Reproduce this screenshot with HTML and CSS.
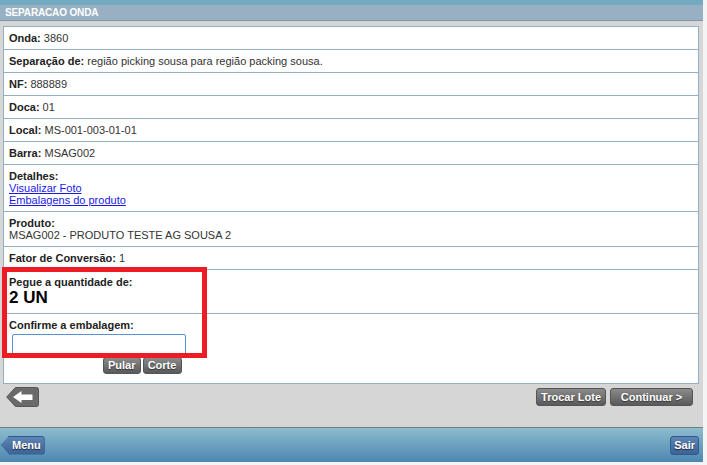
FILE: index.html
```html
<!DOCTYPE html>
<html lang="pt">
<head>
<meta charset="utf-8">
<title>Separacao Onda</title>
<link rel="stylesheet" href="styles.css">
</head>
<body>
<div class="page">
  <div class="topstrip"></div>
  <div class="titlebar">SEPARACAO ONDA</div>
  <main class="content">
    <div class="list">
      <div class="row"><b>Onda:</b> 3860</div>
      <div class="row"><b>Separação de:</b> região picking sousa para região packing sousa.</div>
      <div class="row"><b>NF:</b> 888889</div>
      <div class="row"><b>Doca:</b> 01</div>
      <div class="row"><b>Local:</b> MS-001-003-01-01</div>
      <div class="row"><b>Barra:</b> MSAG002</div>
      <div class="row multi"><b>Detalhes:</b><br><a href="#">Visualizar Foto</a><br><a href="#">Embalagens do produto</a></div>
      <div class="row multi"><b>Produto:</b><br>MSAG002 - PRODUTO TESTE AG SOUSA 2</div>
      <div class="row"><b>Fator de Conversão:</b> 1</div>
      <div class="row qty"><b>Pegue a quantidade de:</b><div class="big">2 UN</div></div>
      <div class="row confirm">
        <b>Confirme a embalagem:</b>
        <input class="field" type="text">
        <div class="smallbtns"><span class="btn small">Pular</span><span class="btn small corte">Corte</span></div>
      </div>
    </div>
    <div class="actions">
      <svg class="back" width="33" height="20" viewBox="0 0 33 20">
        <path d="M9.5 .5H30.5a2 2 0 0 1 2 2V17.500a2 2 0 0 1-2 2H9.500L.7 10Z" fill="#6a6a6a" stroke="#555"/>
        <path d="M7 10 15.500 4v3.500h11v5.500h-11V16Z" fill="#fff"/>
      </svg>
      <div class="rightbtns"><span class="btn">Trocar Lote</span><span class="btn wide">Continuar &gt;</span></div>
    </div>
  </main>
  <footer class="footer">
    <span class="navbtn menu">Menu</span>
    <span class="navbtn">Sair</span>
  </footer>
</div>
<div class="highlight"></div>
</body>
</html>
```
FILE: styles.css
```css
html, body { margin: 0; padding: 0; background: #f4f4f4; }
body { font-family: "Liberation Sans", Arial, sans-serif; font-size: 11px; color: #333; width: 707px; height: 465px; overflow: hidden; position: relative; }
.page { width: 703px; height: 462px; display: flex; flex-direction: column; }
.topstrip { height: 5px; background: #75aac3; flex: none; }
.titlebar { height: 15px; line-height: 15px; flex: none; background: #97b0c3; border-bottom: 1px solid #7f98ab; color: #fff; font-size: 10px; font-weight: bold; padding-left: 5px; letter-spacing: -0.15px; }
.content { flex: 1; background: #d6d6d6; padding: 5px 4px 0 3px; display: flex; flex-direction: column; }
.list { background: #fff; border: 1px solid #95b0c4; height: 356px; box-sizing: content-box; }
.row { border-bottom: 1px solid #95b0c4; padding: 0 5px; height: 22px; line-height: 22px; box-sizing: content-box; }
.row b { color: #222; }
.multi { line-height: 12px; padding-top: 5px; box-sizing: border-box; }
.row.multi { height: 47px; }
.row.multi + .row.multi { height: 35px; }
.row.multi a { color: #1a1ae6; }
.row.qty { height: 44px; line-height: 12px; padding-top: 6px; box-sizing: border-box; }
.big { font-size: 17px; font-weight: bold; color: #000; line-height: 19px; }
.row.confirm { border-bottom: 0; height: 69px; line-height: 12px; padding-top: 5px; box-sizing: border-box; }
.row.confirm b { display: block; }
.field { display: block; width: 174px; height: 21px; box-sizing: border-box; margin: 3px 0 0 3px; border: 1px solid #5b8ed8; border-radius: 2px; background: #fff; padding: 0; outline: 0; }
.smallbtns { display: flex; gap: 2px; margin: 2px 0 0 94px; }
.btn { display: inline-block; background: linear-gradient(#8a8a8a, #5a5a5a); border: 1px solid #555; border-radius: 3px; color: #fff; font-weight: bold; font-size: 11px; text-align: center; height: 18px; line-height: 17px; padding: 0 4px; box-sizing: border-box; text-shadow: 0 1px 1px #333; }
.btn.small { height: 17px; line-height: 15px; padding: 0 4px; }
.btn.corte { width: 39px; }
.actions { display: flex; justify-content: space-between; align-items: flex-start; padding: 3px 6px 0 3px; }
.rightbtns { display: flex; gap: 4px; margin-top: 1px; }
.btn.wide { width: 83px; }
.footer { height: 35px; flex: none; box-sizing: border-box; border-top: 1px solid #6d7b84; background: linear-gradient(#8dbccd, #4c86b2); display: flex; justify-content: space-between; align-items: center; padding: 0 4px 0 1px; }
.navbtn { height: 19px; line-height: 17px; box-sizing: border-box; border: 1px solid #2f5a8f; border-radius: 3px; background: linear-gradient(#5d84b5, #3b6396); color: #fff; font-weight: bold; font-size: 11px; padding: 0 3px; text-shadow: 0 1px 1px #223; }
.menu { padding: 0 3px 0 10px; clip-path: polygon(0 50%, 8px 0, 100% 0, 100% 100%, 8px 100%); border-radius: 0 3px 3px 0; }
.highlight { position: absolute; left: 2px; top: 267px; width: 205px; height: 91px; box-sizing: border-box; border: 5px solid #ed1c24; }
```
